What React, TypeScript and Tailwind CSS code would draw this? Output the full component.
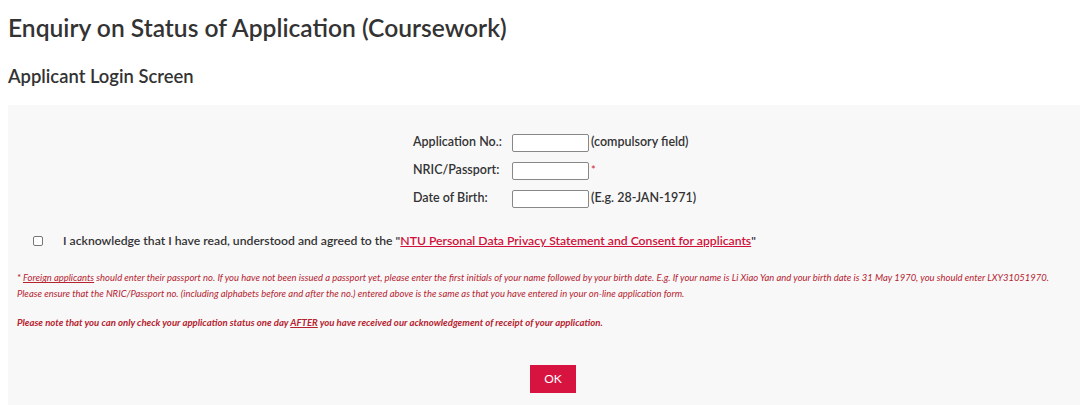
import React from "react";

export default function App() {
  return (
    <div
      className="w-[1080px] h-[405px] bg-white overflow-hidden text-[#333333]"
      style={{ fontFamily: "Lato, 'Open Sans', sans-serif" }}
    >
      <div className="pl-2 pt-[12px]">
        <h1 className="text-[24.6px] leading-[32px] font-semibold text-[#333333]">
          Enquiry on Status of Application (Coursework)
        </h1>
        <h2 className="mt-[20px] text-[18.4px] leading-[24px] font-semibold text-[#333333]">
          Applicant Login Screen
        </h2>
      </div>
      <div className="ml-2 mt-[17px] bg-[#f9f8f9] h-[400px] pt-[29px]">
        <div className="ml-[405px] flex flex-col gap-[11px] text-[12.5px] font-semibold text-[#333333]">
          <div className="flex items-center h-[17px]">
            <span className="w-[99px]">Application No.:</span>
            <input className="w-[77px] h-[18px] bg-white border border-[#888] rounded-[2px]" />
            <span className="ml-[2px]">(compulsory field)</span>
          </div>
          <div className="flex items-center h-[17px]">
            <span className="w-[99px]">NRIC/Passport:</span>
            <input className="w-[77px] h-[18px] bg-white border border-[#888] rounded-[2px]" />
            <span className="ml-[2px] text-[#d13a4a] text-[11px] self-start">*</span>
          </div>
          <div className="flex items-center h-[17px]">
            <span className="w-[99px]">Date of Birth:</span>
            <input className="w-[77px] h-[18px] bg-white border border-[#888] rounded-[2px]" />
            <span className="ml-[2px]">(E.g. 28-JAN-1971)</span>
          </div>
        </div>
        <div className="mt-[25px] ml-[25px] flex items-center text-[12.2px] font-semibold">
          <span className="w-[10px] h-[10px] border border-[#777] rounded-[2px] bg-white"></span>
          <span className="ml-[20px]">
            I acknowledge that I have read, understood and agreed to the "
            <span className="text-[#d0103a] underline">
              NTU Personal Data Privacy Statement and Consent for applicants
            </span>
            "
          </span>
        </div>
        <div className="mt-[20px] ml-[9px] text-[9.45px] italic text-[#b5232f] leading-[16px]">
          <p>
            * <span className="underline">Foreign applicants</span> should enter their passport no. If you have not been issued a passport yet, please enter the first initials of your name followed by your birth date. E.g. If your name is Li Xiao Yan and your birth date is 31 May 1970, you should enter LXY31051970.
          </p>
          <p>
            Please ensure that the NRIC/Passport no. (including alphabets before and after the no.) entered above is the same as that you have entered in your on-line application form.
          </p>
          <p className="mt-[13px] font-bold text-[9.6px]">
            Please note that you can only check your application status one day <span className="underline">AFTER</span> you have received our acknowledgement of receipt of your application.
          </p>
        </div>
        <div className="mt-[34px] flex justify-center">
          <button className="ml-[18px] w-[46px] h-[28px] bg-[#d71440] text-white text-[12px]">
            OK
          </button>
        </div>
      </div>
    </div>
  );
}
